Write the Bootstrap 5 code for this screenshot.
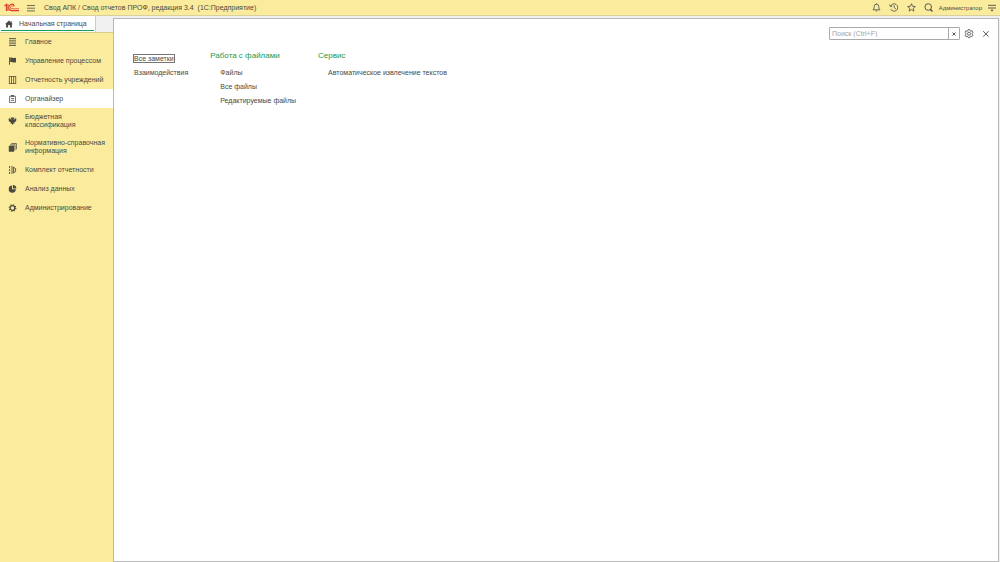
<!DOCTYPE html>
<html lang="ru">
<head>
<meta charset="utf-8">
<meta name="viewport" content="width=device-width, initial-scale=1">
<title>Свод АПК / Свод отчетов ПРОФ</title>
<link href="https://cdn.jsdelivr.net/npm/bootstrap@5.3.0/dist/css/bootstrap.min.css" rel="stylesheet">
<style>
  :root { --ink: #4a4a42; --yellow: #fbec9d; --line: #b8b8b8; --green: #12a04a; }
  body { font-family: "Liberation Sans", Arial, sans-serif; font-size: 7px; line-height: 8px; color: var(--ink); background: #f0f0f0; }
  a { color: inherit; text-decoration: none; }
  svg { display: block; flex: none; fill: none; stroke: currentColor; }
  .solid { fill: currentColor; stroke: none; }
  .icon-btn { border: 0; padding: 0; background: none; color: inherit; display: block; }
  .topbar { height: 16px; background: var(--yellow); border-bottom: 1px solid #d9d09c; padding: 0 4px; }
  .logo { color: #dc3b2c; }
  .app-title { font-size: 7px; margin-left: 9px; }
  .user-name { font-size: 6px; margin: 0 6px; }
  .left-side { width: 113px; }
  .tab-strip { height: 16px; background: #f0f0f0; }
  .home-tab { width: 96px; padding: 0 0 0 5px; gap: 6px; background: #fff; border-right: 1px solid #ccc; }
  .home-tab::after { content: ""; position: absolute; left: 1px; right: 1px; bottom: 1px; height: 1px; background: var(--green); }
  .side-menu { background: var(--yellow); box-shadow: inset 0 1px #d9cf91; }
  .side-link { min-height: 19px; padding: 0 4px 0 8px; gap: 8px; }
  .side-link.two-line { min-height: 26px; }
  .side-link.current { background: #fff; }
  .panel { margin: 2px 1px 0 0; background: #fff; border: 1px solid var(--line); }
  .search-row { padding: 8px 8px 0 0; }
  .search-box { width: 131px; height: 13px; border: 1px solid #aaa; border-radius: 1px; }
  .search-box input { min-width: 0; border: 0; padding: 0 2px; outline: 0; font-size: 7px; }
  .search-box input::placeholder { color: #a3a3a3; opacity: 1; }
  .clear-btn { width: 11px; border-left: 1px solid #aaa; }
  .commands { padding: 11px 20px; gap: 22px; }
  .commands h2 { font-size: 8px; line-height: 10px; margin: 0; color: #1c9848; font-weight: 400; }
  .commands li { height: 14px; }
  .plain-list { padding-top: 4px; }
  .sub-list { padding: 8px 0 0 10px; }
  .focused { outline: 1px solid #777; }
</style>
</head>
<body>
<div class="d-flex flex-column min-vh-100">
  <header class="topbar d-flex align-items-center">
    <svg class="logo" width="15" height="9" viewBox="0 0 15 9" stroke-width="1.1" aria-label="1С"><path d="M.3 3.2 2.4 1.4V8M3.9 8V1"/><path d="M10.4 3.2A2.9 3.2 0 1 0 8.2 7.6H15"/><path d="M9 3.7A1.3 1.5 0 1 0 8.1 5.8H15" stroke-width=".8"/></svg>
    <button class="icon-btn ms-2" aria-label="Меню"><svg width="8" height="8" viewBox="0 0 8 8" stroke-width=".8"><path d="M0 1.5h8M0 4.2h8M0 6.9h8"/></svg></button>
    <h1 class="app-title mb-0 fw-normal flex-grow-1 lh-1">Свод АПК / Свод отчетов ПРОФ, редакция 3.4 &nbsp;(1С:Предприятие)</h1>
    <div class="d-flex align-items-center gap-2">
      <button class="icon-btn" aria-label="Уведомления"><svg width="9" height="9" viewBox="0 0 9 9" stroke-width=".8"><path d="M1 6.8h7L6.8 5.2V3.5a2.3 2.3 0 0 0-4.6 0v1.7zM4.5 1.2V.3M3.7 7.9h1.6"/></svg></button>
      <button class="icon-btn" aria-label="История"><svg width="10" height="9" viewBox="0 0 10 9" stroke-width=".8"><path d="M1.6 3.2A3.7 3.7 0 1 1 1.7 6M.4 1.6l1 2 2-.6M5.2 2.3v2.4l1.6 1"/></svg></button>
      <button class="icon-btn" aria-label="Избранное"><svg width="9" height="9" viewBox="0 0 9 9" stroke-width=".8"><path d="m4.5.7 1.1 2.6 2.8.2-2.2 1.8.7 2.8-2.4-1.5-2.4 1.5.7-2.8L.6 3.5l2.8-.2z"/></svg></button>
      <button class="icon-btn" aria-label="Поиск"><svg width="9" height="9" viewBox="0 0 9 9" stroke-width=".9"><circle cx="4.2" cy="4" r="3.3"/><path d="m6.2 6.3 2.2 2.2" stroke-width="1.4"/></svg></button>
    </div>
    <a href="#" class="user-name">Администратор</a>
    <button class="icon-btn" aria-label="Сервис и настройки"><svg width="8" height="8" viewBox="0 0 8 8" stroke-width=".9"><path d="M0 1.3h8M0 4h8"/><path class="solid" d="M2.3 5.8h3.4L4 7.6z"/></svg></button>
  </header>

  <div class="d-flex flex-grow-1">
    <div class="left-side d-flex flex-column flex-shrink-0">
      <div class="tab-strip d-flex">
        <a href="#" class="home-tab position-relative d-flex align-items-center">
          <svg class="solid" width="8" height="8" viewBox="0 0 8 8"><path d="M4 .5 0 4.2h1.1v3.3h2V5h1.8v2.5h2V4.2H8L6.7 3V1.2h-.9v1z"/></svg>
          <span>Начальная страница</span>
        </a>
      </div>
      <nav class="side-menu flex-grow-1" aria-label="Разделы">
        <a href="#" class="side-link d-flex align-items-center"><svg width="9" height="8" viewBox="0 0 9 8"><path d="M1 .7h7M1 2.9h7M1 5.1h7M1 7.3h7"/></svg>Главное</a>
        <a href="#" class="side-link d-flex align-items-center"><svg class="solid" width="9" height="8" viewBox="0 0 9 8"><path d="M1 .3h.9v7.4H1zM2.2.8c1.6-.8 2.3.9 5.8 0v4.4c-3.3.9-4-.8-5.8 0z"/></svg>Управление процессом</a>
        <a href="#" class="side-link d-flex align-items-center"><svg width="9" height="8" viewBox="0 0 9 8" stroke-width=".8"><path d="M1.4 0v8M3.5 0v8M5.6 0v8M7.7 0v8M1 .4h7M1 7.6h7"/></svg>Отчетность учреждений</a>
        <a href="#" class="side-link current d-flex align-items-center" aria-current="page"><svg width="9" height="8" viewBox="0 0 9 8" stroke-width=".8"><path d="M1.6 1.2h5.8v6.4H1.6zM3 3.5h3M3 5.4h3"/><path d="M3.1.9h2.8" stroke-width="1.6"/></svg>Органайзер</a>
        <a href="#" class="side-link two-line d-flex align-items-center"><svg class="solid" width="9" height="8" viewBox="0 0 9 8"><path d="M2.8.2 4 .8l.5-.6.5.6 1.2-.6.2 1.2L5.6 2l.2.7L8 .9c.8 1.7.3 3.1-.8 4.1L6 5.5l.6 1.3-1.3-.2L4.5 8l-.8-1.4-1.3.2L3 5.5l-1.2-.5C.7 4 .2 2.6 1 .9l2.2 1.8.2-.7-.8-.6z"/></svg><span>Бюджетная<br>классификация</span></a>
        <a href="#" class="side-link two-line d-flex align-items-center"><svg class="solid" width="9" height="9" viewBox="0 0 9 9"><path d="M.8 2.8h5.2v5.9H.8zM2 1.4h5.3v5.8l-.8.9V2.2H2zM3.4.2h5.3V6l-.8.9V1H3.4z"/></svg><span>Нормативно-справочная<br>информация</span></a>
        <a href="#" class="side-link d-flex align-items-center"><svg width="9" height="8" viewBox="0 0 9 8" stroke-width=".9"><path d="M1.6 0v2M1.6 2.9v2.3M1.6 6v2M4 0v8M5.6.9v6.2M5.6 1.4l2 1.2v3l-2 1.1"/></svg>Комплект отчетности</a>
        <a href="#" class="side-link d-flex align-items-center"><svg class="solid" width="9" height="8" viewBox="0 0 9 8"><path d="M4.1.5v3.8h3.8A3.6 3.6 0 1 1 4.1.5zM5 0a3.5 3.5 0 0 1 3.4 3.4H5z"/></svg>Анализ данных</a>
        <a href="#" class="side-link d-flex align-items-center"><svg width="9" height="8" viewBox="0 0 9 8"><circle cx="4.5" cy="4" r="2.3" stroke-width="1.2"/><circle cx="4.5" cy="4" r="3.3" stroke-width="1.1" stroke-dasharray="1.3 1.29"/></svg>Администрирование</a>
      </nav>
    </div>

    <main class="panel flex-grow-1">
      <div class="search-row d-flex justify-content-end align-items-center">
        <div class="search-box d-flex">
          <input class="flex-grow-1" type="text" aria-label="Поиск" placeholder="Поиск (Ctrl+F)">
          <button class="icon-btn clear-btn d-flex align-items-center justify-content-center" aria-label="Очистить"><svg width="4" height="4" viewBox="0 0 4 4" stroke-width=".9"><path d="m.5.5 3 3m0-3-3 3"/></svg></button>
        </div>
        <button class="icon-btn px-1" aria-label="Настройка"><svg width="10" height="10" viewBox="0 0 10 10" stroke-width=".8"><path d="M4.2.6h1.6l.3 1.2.8.4 1.2-.4.9 1.4-.9.9v1l.9 1-.9 1.4-1.2-.4-.8.4-.3 1.2H4.2l-.3-1.2-.8-.4-1.2.4L1 6.1l.9-1v-1L1 3.2l.9-1.4 1.2.4.8-.4z"/><circle cx="5" cy="4.7" r="1.5"/></svg></button>
        <button class="icon-btn ms-1" aria-label="Закрыть"><svg width="8" height="8" viewBox="0 0 8 8" stroke-width=".9"><path d="m1.2 1.2 5.4 5.4m0-5.4L1.2 6.6"/></svg></button>
      </div>
      <div class="commands d-flex align-items-start">
        <ul class="plain-list list-unstyled mb-0">
          <li><a href="#" class="focused">Все заметки</a></li>
          <li><a href="#">Взаимодействия</a></li>
        </ul>
        <section>
          <h2>Работа с файлами</h2>
          <ul class="sub-list list-unstyled mb-0">
            <li><a href="#">Файлы</a></li>
            <li><a href="#">Все файлы</a></li>
            <li><a href="#">Редактируемые файлы</a></li>
          </ul>
        </section>
        <section>
          <h2>Сервис</h2>
          <ul class="sub-list list-unstyled mb-0">
            <li><a href="#">Автоматическое извлечение текстов</a></li>
          </ul>
        </section>
      </div>
    </main>
  </div>
</div>
<script src="https://cdn.jsdelivr.net/npm/bootstrap@5.3.0/dist/js/bootstrap.bundle.min.js"></script>
</body>
</html>
